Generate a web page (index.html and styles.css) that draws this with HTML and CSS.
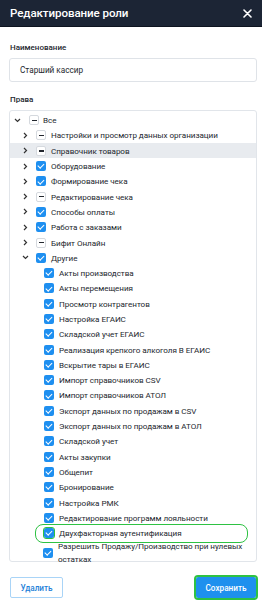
FILE: index.html
```html
<!DOCTYPE html>
<html lang="ru">
<head>
<meta charset="utf-8">
<link rel="stylesheet" href="styles.css">
</head>
<body>
<div class="modal">
  <div class="header">
    <span class="title">Редактирование роли</span>
    <svg class="close" width="9" height="9" viewBox="0 0 9 9"><path d="M1 1L8 8M8 1L1 8" stroke="#fff" stroke-width="1.6" stroke-linecap="round"/></svg>
  </div>
  <div class="content">
    <div class="label l-name">Наименование</div>
    <div class="input">Старший кассир</div>
    <div class="label l-rights">Права</div>
    <div class="tree">
      <div class="row lv0"><span class="sw"><svg width="7" height="7" viewBox="0 0 7 7"><path d="M1 2L3.5 4.5L6 2" fill="none" stroke="#333" stroke-width="1.2"/></svg></span><span class="cb ind"></span><span class="tx">Все</span></div>
      <div class="row lv1"><span class="sw"><svg width="7" height="7" viewBox="0 0 7 7"><path d="M2 1L4.5 3.5L2 6" fill="none" stroke="#333" stroke-width="1.2"/></svg></span><span class="cb ind"></span><span class="tx">Настройки и просмотр данных организации</span></div>
      <div class="row lv1 hl"><span class="sw"><svg width="7" height="7" viewBox="0 0 7 7"><path d="M2 1L4.5 3.5L2 6" fill="none" stroke="#333" stroke-width="1.2"/></svg></span><span class="cb ind"></span><span class="tx">Справочник товаров</span></div>
      <div class="row lv1"><span class="sw"><svg width="7" height="7" viewBox="0 0 7 7"><path d="M2 1L4.5 3.5L2 6" fill="none" stroke="#333" stroke-width="1.2"/></svg></span><span class="cb on"></span><span class="tx">Оборудование</span></div>
      <div class="row lv1"><span class="sw"><svg width="7" height="7" viewBox="0 0 7 7"><path d="M2 1L4.5 3.5L2 6" fill="none" stroke="#333" stroke-width="1.2"/></svg></span><span class="cb on"></span><span class="tx">Формирование чека</span></div>
      <div class="row lv1"><span class="sw"><svg width="7" height="7" viewBox="0 0 7 7"><path d="M2 1L4.5 3.5L2 6" fill="none" stroke="#333" stroke-width="1.2"/></svg></span><span class="cb ind"></span><span class="tx">Редактирование чека</span></div>
      <div class="row lv1"><span class="sw"><svg width="7" height="7" viewBox="0 0 7 7"><path d="M2 1L4.5 3.5L2 6" fill="none" stroke="#333" stroke-width="1.2"/></svg></span><span class="cb on"></span><span class="tx">Способы оплаты</span></div>
      <div class="row lv1"><span class="sw"><svg width="7" height="7" viewBox="0 0 7 7"><path d="M2 1L4.5 3.5L2 6" fill="none" stroke="#333" stroke-width="1.2"/></svg></span><span class="cb on"></span><span class="tx">Работа с заказами</span></div>
      <div class="row lv1"><span class="sw"><svg width="7" height="7" viewBox="0 0 7 7"><path d="M2 1L4.5 3.5L2 6" fill="none" stroke="#333" stroke-width="1.2"/></svg></span><span class="cb ind"></span><span class="tx">Бифит Онлайн</span></div>
      <div class="row lv1"><span class="sw"><svg width="7" height="7" viewBox="0 0 7 7"><path d="M1 2L3.5 4.5L6 2" fill="none" stroke="#333" stroke-width="1.2"/></svg></span><span class="cb on"></span><span class="tx">Другие</span></div>
      <div class="row lv2"><span class="sw"></span><span class="cb on"></span><span class="tx">Акты производства</span></div>
      <div class="row lv2"><span class="sw"></span><span class="cb on"></span><span class="tx">Акты перемещения</span></div>
      <div class="row lv2"><span class="sw"></span><span class="cb on"></span><span class="tx">Просмотр контрагентов</span></div>
      <div class="row lv2"><span class="sw"></span><span class="cb on"></span><span class="tx">Настройка ЕГАИС</span></div>
      <div class="row lv2"><span class="sw"></span><span class="cb on"></span><span class="tx">Складской учет ЕГАИС</span></div>
      <div class="row lv2"><span class="sw"></span><span class="cb on"></span><span class="tx">Реализация крепкого алкоголя В ЕГАИС</span></div>
      <div class="row lv2"><span class="sw"></span><span class="cb on"></span><span class="tx">Вскрытие тары в ЕГАИС</span></div>
      <div class="row lv2"><span class="sw"></span><span class="cb on"></span><span class="tx">Импорт справочников CSV</span></div>
      <div class="row lv2"><span class="sw"></span><span class="cb on"></span><span class="tx">Импорт справочников АТОЛ</span></div>
      <div class="row lv2"><span class="sw"></span><span class="cb on"></span><span class="tx">Экспорт данных по продажам в CSV</span></div>
      <div class="row lv2"><span class="sw"></span><span class="cb on"></span><span class="tx">Экспорт данных по продажам в АТОЛ</span></div>
      <div class="row lv2"><span class="sw"></span><span class="cb on"></span><span class="tx">Складской учет</span></div>
      <div class="row lv2"><span class="sw"></span><span class="cb on"></span><span class="tx">Акты закупки</span></div>
      <div class="row lv2"><span class="sw"></span><span class="cb on"></span><span class="tx">Общепит</span></div>
      <div class="row lv2"><span class="sw"></span><span class="cb on"></span><span class="tx">Бронирование</span></div>
      <div class="row lv2"><span class="sw"></span><span class="cb on"></span><span class="tx">Настройка РМК</span></div>
      <div class="row lv2"><span class="sw"></span><span class="cb on"></span><span class="tx">Редактирование программ лояльности</span></div>
      <div class="row lv2 mark"><span class="sw"></span><span class="cb on green"></span><span class="tx">Двухфакторная аутентификация</span><span class="ring"></span></div>
      <div class="row lv2 tall"><span class="sw"></span><span class="cb on"></span><span class="tx">Разрешить Продажу/Производство при нулевых остатках</span></div>
    </div>
    <div class="footer">
      <button class="btn del">Удалить</button>
      <button class="btn save">Сохранить</button>
    </div>
  </div>
</div>
</body>
</html>
```

FILE: styles.css
```css
* { box-sizing: border-box; }
html, body { margin: 0; padding: 0; background: #fff; }
body { width: 262px; height: 600px; font-family: Roboto, "Liberation Sans", sans-serif; color: #23272e; }
.modal { display: flex; flex-direction: column; height: 600px; }
.header {
  height: 27px; background: #1c2535; border-bottom: 1px solid #0e1420;
  display: flex; align-items: center; justify-content: space-between;
  padding: 0 10px 0 10px;
}
.title { color: #fff; font-size: 11.6px; font-weight: 500; letter-spacing: -0.1px; }
.close { display: block; margin-right: 0; }
.content { padding: 0 5px 0 9px; display: flex; flex-direction: column; flex: 1; }
.label { font-size: 8px; font-weight: 500; color: #23272e; line-height: 10px; padding-left: 1px; }
.l-name { margin-top: 16px; }
.input {
  margin-top: 5px; height: 24px; border: 1px solid #dfe3e8; border-radius: 3px;
  display: flex; align-items: center; padding-left: 10px; font-size: 8.2px; color: #23272e;
}
.l-rights { margin-top: 13px; }
.tree {
  margin-top: 5px; width: 248px; height: 452px; border: 1px solid #e1e5ea; border-radius: 3px;
  padding-top: 1.5px;
}
.row { position: relative; display: flex; align-items: center; height: 15.3px; font-size: 8.1px; color: #23272e; letter-spacing: -0.05px; }
.row.hl { background: #e8ebef; }
.lv0 { padding-left: 0; }
.lv1 { padding-left: 8px; }
.lv2 { padding-left: 16px; }
.sw { width: 14px; height: 10px; display: flex; align-items: center; justify-content: center; flex: none; }
.lv2 .sw { width: 14px; }
.sw svg { display: block; }
.cb {
  width: 10px; height: 10px; border-radius: 2px; flex: none; margin-left: 4px; position: relative;
}
.lv0 .cb { margin-left: 5px; }
.cb.ind { background: #fff; border: 1px solid #d5d9de; }
.cb.ind::after { content: ""; position: absolute; left: 2px; top: 3.4px; width: 4.5px; height: 1.4px; background: #23272e; }
.cb.on { background: #1e8ff0; }
.cb.on::after {
  content: ""; position: absolute; left: 3.3px; top: 1.2px; width: 2.5px; height: 5px;
  border: solid #fff; border-width: 0 1.2px 1.2px 0; transform: rotate(45deg);
}
.cb.green { outline: 1px solid #2ec243; }
.tx { margin-left: 5px; white-space: nowrap; }
.lv0 .tx { margin-left: 4px; }
.tall { height: 24px; align-items: center; }
.tall .tx { white-space: normal; line-height: 13px; width: 190px; margin-left: 5px; }
.tall .cb { margin-left: 3px; }
.ring {
  position: absolute; left: 25px; top: -1.5px; width: 213px; height: 19px;
  border: 1.5px solid #2ec243; border-radius: 8px;
}
.footer { display: flex; justify-content: space-between; margin-top: 15px; padding-right: 1px; }
.btn { font-family: Roboto, "Liberation Sans", sans-serif; font-size: 8.2px; font-weight: 500; height: 21px; border-radius: 2px; cursor: pointer; padding: 0; }
.del { width: 53px; margin-left: 1px; background: #fff; border: 1px solid #a9d4f7; color: #1e7fd8; }
.save { width: 60px; background: #1e90ee; border: none; color: #fff; outline: 2px solid #2ec243; }
```
